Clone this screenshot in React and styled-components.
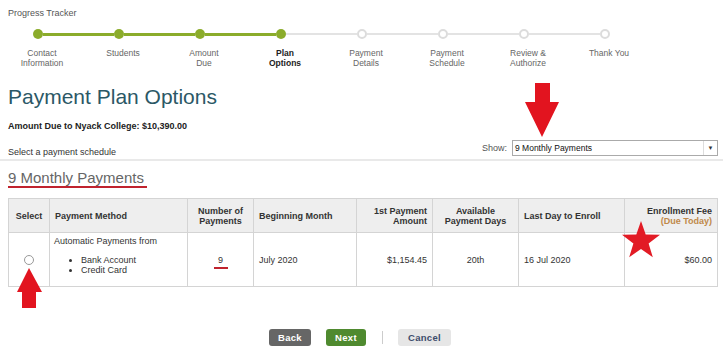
import React from "react";
import styled, { createGlobalStyle } from "styled-components";

const Global = createGlobalStyle`
  html, body { margin: 0; padding: 0; background: #fff; }
  body { font-family: "Liberation Sans", Arial, sans-serif; color: #333; }
`;

const Page = styled.div`
  position: relative;
  width: 723px;
  height: 353px;
  overflow: hidden;
  padding: 0 6px 0 8px;
  box-sizing: border-box;
`;

const TrackerTitle = styled.div`
  font-size: 9px;
  line-height: 11px;
  color: #555;
  padding-top: 8px;
`;

const DotRow = styled.div`
  display: flex;
  align-items: center;
  margin-top: 10px;
  margin-left: 25px;
  height: 10px;
`;

const Dot = styled.span`
  width: 10px;
  height: 10px;
  border-radius: 50%;
  box-sizing: border-box;
  flex: none;
  background: ${(p) => (p.$done ? "#8bac2b" : "#fff")};
  border: ${(p) => (p.$done ? "none" : "2px solid #dcdcdc")};
`;

const Seg = styled.span`
  width: 71px;
  flex: none;
  height: ${(p) => (p.$done ? "3px" : "2px")};
  background: ${(p) => (p.$done ? "#8bac2b" : "#e3e3e3")};
`;

const LabelRow = styled.div`
  display: flex;
  gap: 21px;
  margin-top: 9px;
  margin-left: 4px;
`;

const StepLabel = styled.div`
  width: 60px;
  flex: none;
  text-align: center;
  font-size: 8.5px;
  line-height: 10px;
  color: ${(p) => (p.$current ? "#222" : "#666")};
  font-weight: ${(p) => (p.$current ? "bold" : "normal")};
`;

const Heading = styled.h1`
  margin: 17px 0 0;
  font-size: 21px;
  line-height: 24px;
  font-weight: normal;
  color: #2b5866;
`;

const AmountDue = styled.div`
  margin-top: 12px;
  font-size: 9px;
  line-height: 11px;
  font-weight: bold;
  color: #222;
`;

const ScheduleRow = styled.div`
  display: flex;
  justify-content: space-between;
  align-items: flex-end;
  margin-top: 8px;
  padding-bottom: 1px;
  border-bottom: 2px solid #e9e9e9;
  margin-left: -8px;
  margin-right: -6px;
  padding-left: 8px;
  padding-right: 5px;
`;

const ScheduleLabel = styled.div`
  font-size: 9px;
  line-height: 11px;
  color: #333;
`;

const ShowGroup = styled.div`
  display: flex;
  align-items: center;
  gap: 5px;
  font-size: 9px;
  color: #555;
  margin-bottom: 2px;
`;

const Select = styled.div`
  width: 206px;
  height: 16px;
  box-sizing: border-box;
  border: 1px solid #aaa;
  display: flex;
  align-items: center;
  justify-content: space-between;
  font-size: 8.5px;
  color: #111;
  padding-left: 2px;
`;

const Caret = styled.span`
  width: 13px;
  height: 14px;
  border-left: 1px solid #ddd;
  display: flex;
  align-items: center;
  justify-content: center;
  font-size: 6px;
  color: #333;
`;

const SubHeading = styled.h2`
  margin: 9px 0 0;
  width: fit-content;
  font-size: 15px;
  line-height: 16px;
  font-weight: normal;
  color: #666;
  padding: 0 3px 0 0;
  border-bottom: 2px solid #c0232e;
`;

const Table = styled.table`
  margin-top: 10px;
  width: 709px;
  border-collapse: collapse;
  table-layout: fixed;
  font-size: 9px;
  color: #333;
`;

const Th = styled.th`
  background: #eeeeee;
  border: 1px solid #d4d4d4;
  height: 33px;
  padding: 0 5px;
  font-size: 9px;
  font-weight: bold;
  line-height: 10px;
  color: #333;
  text-align: ${(p) => p.$align || "left"};
`;

const Td = styled.td`
  border: 1px solid #d4d4d4;
  height: 50px;
  padding: 0 5px;
  font-size: 9px;
  line-height: 10px;
  vertical-align: middle;
  text-align: ${(p) => p.$align || "left"};
`;

const MethodCell = styled(Td)`
  vertical-align: top;
  padding-top: 3px;
  padding-left: 4px;
`;

const BulletList = styled.ul`
  margin: 9px 0 0;
  padding-left: 27px;
  list-style: disc;
  li { line-height: 10px; font-size: 9px; }
`;

const Radio = styled.span`
  display: inline-block;
  vertical-align: middle;
  width: 8px;
  height: 8px;
  border: 1px solid #999;
  border-radius: 50%;
  background: #fff;
`;

const Count = styled.span`
  display: inline-block;
  position: relative;
  &::after {
    content: "";
    position: absolute;
    left: -4px;
    right: -5px;
    bottom: -4px;
    height: 2px;
    background: #c0232e;
  }
`;

const DueToday = styled.span`
  color: #c0894a;
`;

const Buttons = styled.div`
  display: flex;
  justify-content: center;
  align-items: center;
  margin-top: 42px;
  padding-right: 5px;
`;

const Btn = styled.button`
  height: 17px;
  width: ${(p) => p.$w}px;
  border: none;
  border-radius: 3px;
  font-family: "Liberation Sans", Arial, sans-serif;
  font-size: 9.5px;
  font-weight: bold;
  letter-spacing: 0.3px;
  padding: 0;
  margin-right: ${(p) => p.$mr || 0}px;
  background: ${(p) => p.$bg};
  color: ${(p) => p.$fg};
`;

const Divider = styled.span`
  width: 1px;
  height: 13px;
  background: #ccc;
  margin-right: 15px;
`;

const Overlay = styled.svg`
  position: absolute;
  left: ${(p) => p.$x}px;
  top: ${(p) => p.$y}px;
`;

const steps = [
  ["Contact", "Information"],
  ["Students"],
  ["Amount", "Due"],
  ["Plan", "Options"],
  ["Payment", "Details"],
  ["Payment", "Schedule"],
  ["Review &", "Authorize"],
  ["Thank You"],
];

function starPoints(cx, cy, R, r) {
  const pts = [];
  for (let i = 0; i < 10; i++) {
    const rad = i % 2 === 0 ? R : r;
    const a = -Math.PI / 2 + (i * Math.PI) / 5;
    pts.push(`${(cx + rad * Math.cos(a)).toFixed(1)},${(cy + rad * Math.sin(a)).toFixed(1)}`);
  }
  return pts.join(" ");
}

export default function App() {
  const current = 3;
  return (
    <>
      <Global />
      <Page>
        <TrackerTitle>Progress Tracker</TrackerTitle>
        <DotRow>
          {steps.map((s, i) => (
            <React.Fragment key={i}>
              <Dot $done={i <= current} />
              {i < steps.length - 1 && <Seg $done={i < current} />}
            </React.Fragment>
          ))}
        </DotRow>
        <LabelRow>
          {steps.map((s, i) => (
            <StepLabel key={i} $current={i === current}>
              {s.map((l, j) => (
                <div key={j}>{l}</div>
              ))}
            </StepLabel>
          ))}
        </LabelRow>
        <Heading>Payment Plan Options</Heading>
        <AmountDue>Amount Due to Nyack College: $10,390.00</AmountDue>
        <ScheduleRow>
          <ScheduleLabel>Select a payment schedule</ScheduleLabel>
          <ShowGroup>
            Show:
            <Select>
              9 Monthly Payments
              <Caret>▼</Caret>
            </Select>
          </ShowGroup>
        </ScheduleRow>
        <SubHeading>9 Monthly Payments</SubHeading>
        <Table>
          <colgroup>
            <col style={{ width: 41 }} />
            <col style={{ width: 138 }} />
            <col style={{ width: 66 }} />
            <col style={{ width: 103 }} />
            <col style={{ width: 76 }} />
            <col style={{ width: 86 }} />
            <col style={{ width: 106 }} />
            <col style={{ width: 93 }} />
          </colgroup>
          <thead>
            <tr>
              <Th $align="center">Select</Th>
              <Th>Payment Method</Th>
              <Th $align="center">Number of<br />Payments</Th>
              <Th>Beginning Month</Th>
              <Th $align="right">1st Payment<br />Amount</Th>
              <Th $align="center">Available<br />Payment Days</Th>
              <Th>Last Day to Enroll</Th>
              <Th $align="right">Enrollment Fee<br /><DueToday>(Due Today)</DueToday></Th>
            </tr>
          </thead>
          <tbody>
            <tr>
              <Td $align="center"><Radio /></Td>
              <MethodCell>
                Automatic Payments from
                <BulletList>
                  <li>Bank Account</li>
                  <li>Credit Card</li>
                </BulletList>
              </MethodCell>
              <Td $align="center"><Count>9</Count></Td>
              <Td>July 2020</Td>
              <Td $align="right">$1,154.45</Td>
              <Td $align="center">20th</Td>
              <Td>16 Jul 2020</Td>
              <Td $align="right">$60.00</Td>
            </tr>
          </tbody>
        </Table>
        <Buttons>
          <Btn $w={42} $mr={15} $bg="#666666" $fg="#fff">Back</Btn>
          <Btn $w={40} $mr={16} $bg="#4f8a2f" $fg="#fff">Next</Btn>
          <Divider />
          <Btn $w={53} $bg="#e6e6e6" $fg="#3d4c6c">Cancel</Btn>
        </Buttons>

        <Overlay $x={524} $y={82} width="36" height="56" viewBox="0 0 36 56">
          <polygon points="11,1 26,1 26,20 35,20 18,55 1,20 11,20" fill="#e2141f" />
        </Overlay>
        <Overlay $x={16} $y={267} width="28" height="42" viewBox="0 0 28 42">
          <polygon points="13,1 26,25 20,25 20,41 6,41 6,25 1,25" fill="#e2141f" />
        </Overlay>
        <Overlay $x={620} $y={220} width="42" height="40" viewBox="0 0 42 40">
          <polygon points={starPoints(21, 21, 20, 8)} fill="#e21b25" />
        </Overlay>
      </Page>
    </>
  );
}
